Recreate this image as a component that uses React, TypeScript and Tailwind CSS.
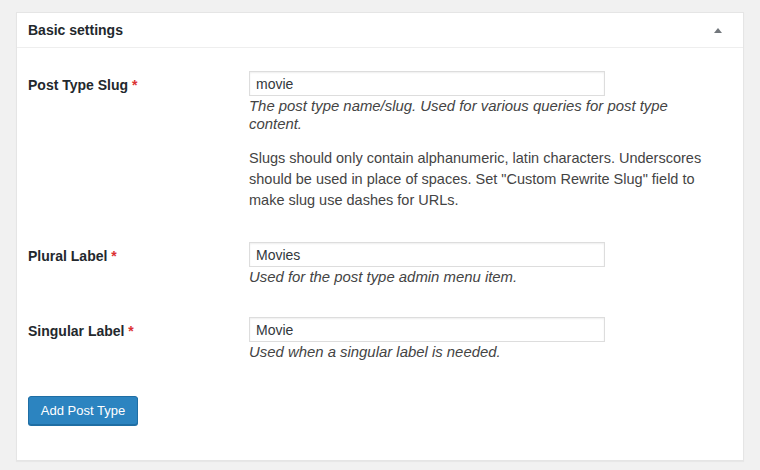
export default function App() {
  const fields = [
    {
      label: "Post Type Slug",
      value: "movie",
      help: "The post type name/slug. Used for various queries for post type content.",
      extra:
        'Slugs should only contain alphanumeric, latin characters. Underscores should be used in place of spaces. Set "Custom Rewrite Slug" field to make slug use dashes for URLs.',
    },
    { label: "Plural Label", value: "Movies", help: "Used for the post type admin menu item." },
    { label: "Singular Label", value: "Movie", help: "Used when a singular label is needed." },
  ];

  return (
    <div
      className="w-[760px] h-[470px] bg-[#f1f1f1] pt-[12px] pl-[16px]"
      style={{ fontFamily: '"Liberation Sans", Arial, sans-serif' }}
    >
      <div className="w-[728px] h-[449px] bg-white border border-[#e5e5e5] shadow-[0_1px_1px_rgba(0,0,0,0.04)]">
        <div className="h-[35px] border-b border-[#eeeeee] flex items-center justify-between pl-[11px] pr-[21px]">
          <h2 className="text-[14px] font-bold text-[#23282d] leading-none">Basic settings</h2>
          <span className="w-0 h-0 border-l-[4px] border-r-[4px] border-b-[5px] border-l-transparent border-r-transparent border-b-[#72777c]" />
        </div>

        <div className="pl-[11px] pt-[23px]">
          <div className="flex flex-col gap-[31px]">
            {fields.map((f) => (
              <div key={f.label} className="flex">
                <label className="w-[221px] shrink-0 text-[14px] font-bold text-[#23282d] leading-[25px] pt-[2px]">
                  {f.label} <span className="text-[#dc3232]">*</span>
                </label>
                <div className="w-[464px]">
                  <input
                    readOnly
                    value={f.value}
                    className="block w-[356px] h-[25px] border border-[#dddddd] shadow-[inset_0_1px_2px_rgba(0,0,0,0.07)] px-[6px] text-[14px] text-[#32373c] outline-none"
                  />
                  <p className="italic text-[14.9px] leading-[18px] text-[#444444] mt-[1px]">{f.help}</p>
                  {f.extra && (
                    <p className="text-[14.5px] leading-[21px] text-[#444444] mt-[15px]">{f.extra}</p>
                  )}
                </div>
              </div>
            ))}
          </div>

          <button className="mt-[35px] w-[110px] h-[29px] rounded-[3px] bg-[#2c84c0] border border-[#1f6ea4] shadow-[0_1px_0_#1f6ea4] text-white text-[13px] leading-none">
            Add Post Type
          </button>
        </div>
      </div>
    </div>
  );
}
